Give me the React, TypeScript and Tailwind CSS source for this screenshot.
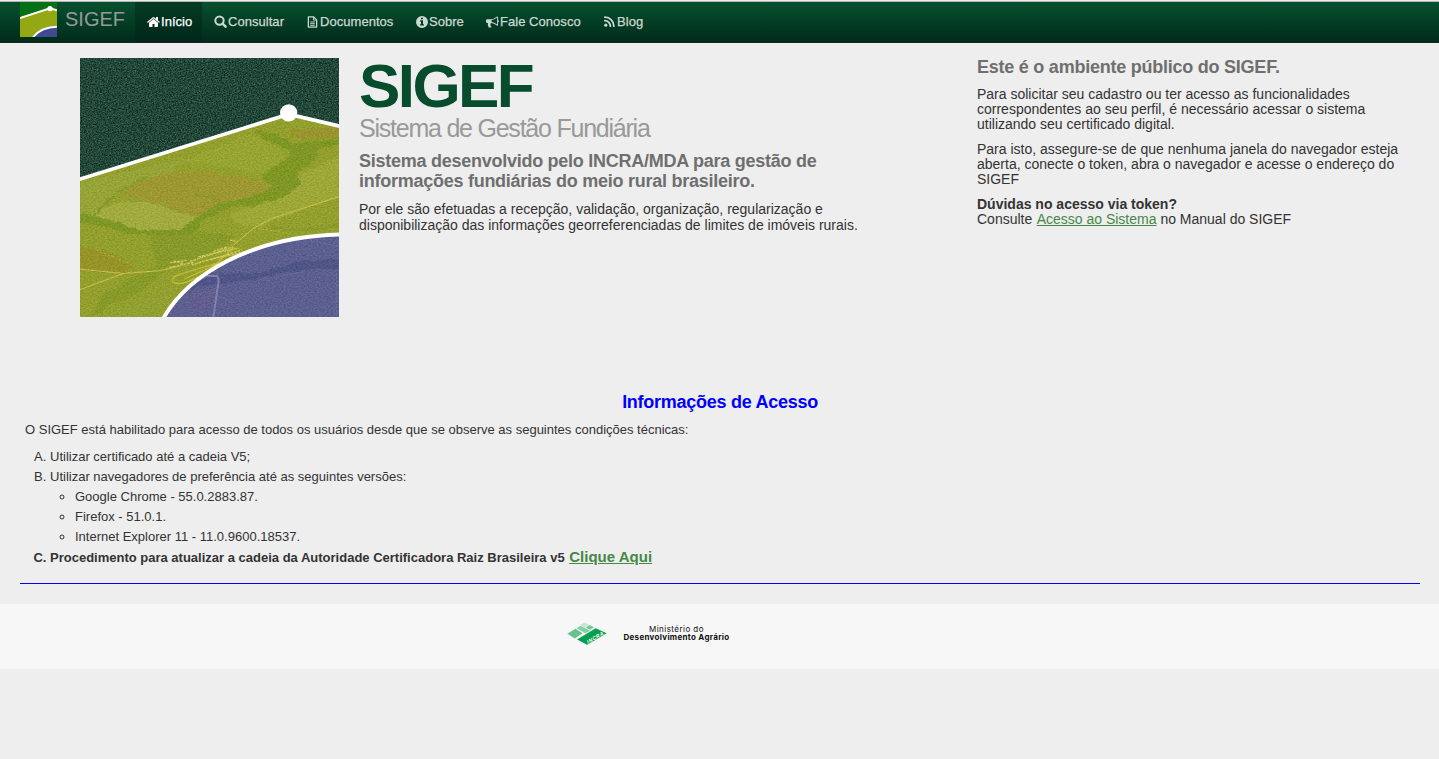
import React from "react";

type IconProps = { className?: string };

const HomeIcon = ({ className }: IconProps) => (
  <svg viewBox="0 0 1664 1792" fill="currentColor" className={className}>
    <path d="M1408 992v480q0 26-19 45t-45 19H960v-384H704v384H320q-26 0-45-19t-19-45V992q0-1 .5-3t.5-3l575-474 575 474q1 2 1 6zm223-69l-62 74q-8 9-21 11h-3q-13 0-21-7L832 424 140 1001q-12 8-24 7-13-2-21-11l-62-74q-8-10-7-23.500T37 878L756 279q32-26 76-26t76 26l244 204V288q0-14 9-23t23-9h192q14 0 23 9t9 23v408l219 182q10 8 11 21.500t-7 23.500z" />
  </svg>
);

const SearchIcon = ({ className }: IconProps) => (
  <svg viewBox="0 0 13 13" fill="none" stroke="currentColor" className={className}>
    <circle cx="5.500" cy="5.600" r="4.200" strokeWidth="2" />
    <path d="M8.600 8.700L11.600 11.700" strokeWidth="2.400" strokeLinecap="round" />
  </svg>
);

const DocIcon = ({ className }: IconProps) => (
  <svg viewBox="0 0 11 13" fill="none" stroke="currentColor" className={className}>
    <path d="M1 1h5.800L10 4.200V12H1z" strokeWidth="1.400" strokeLinejoin="round" />
    <path d="M6.500 1v3.500H10M3 6.500h5M3 8.300h5M3 10.100h5" strokeWidth="1" />
  </svg>
);

const InfoIcon = ({ className }: IconProps) => (
  <svg viewBox="0 0 1536 1536" fill="currentColor" className={className}>
    <path
      fillRule="evenodd"
      d="M768 0a768 768 0 1 1 0 1536A768 768 0 0 1 768 0zM640 224v192h256V224zM512 544v160h128v352H512v160h512v-160H896V544z"
    />
  </svg>
);

const HornIcon = ({ className }: IconProps) => (
  <svg viewBox="0 0 1792 1792" fill="currentColor" className={className}>
    <path
      fillRule="evenodd"
      d="M1664 640q53 0 90.500 37.500T1792 768t-37.500 90.500T1664 896v384q0 52-38 90t-90 38q-417-347-812-380-58 19-91 66t-31 100.500 40 92.500q-20 33-23 65.500t6 58 33.500 55 48 50T768 1568q-29 58-111.500 83t-168.500 11.500-132-55.500q-7-23-29.500-87.500t-32-94.500-23-89-15-101 3.500-98.500 22-110.500H160q-66 0-113-47T0 864V672q0-66 47-113t113-47h480q435 0 896-384 52 0 90 38t38 90zm-128 604V290q-394 302-768 343v270q377 42 768 341z"
    />
  </svg>
);

const RssIcon = ({ className }: IconProps) => (
  <svg viewBox="0 0 11 11" fill="none" stroke="currentColor" className={className}>
    <circle cx="1.800" cy="9.200" r="1.600" fill="currentColor" stroke="none" />
    <path d="M.9 4.700a5.600 5.600 0 0 1 5.500 5.500M.9 1.200a9 9 0 0 1 9 9" strokeWidth="1.800" strokeLinecap="round" />
  </svg>
);

const BrandMark = () => (
  <svg viewBox="60 6 111 105" preserveAspectRatio="none" className="h-[35px] w-[37px] shrink-0">
    <rect x="60" y="6" width="111" height="105" fill="#067014" />
    <path d="M60 54L150 25 171 31V111H60z" fill="#93a813" />
    <path d="M98 111Q122 78 171 77V111z" fill="#414991" />
    <path d="M60 54L150 25 171 31" fill="none" stroke="#fff" strokeWidth="6" />
    <path d="M99 112Q122 81 172 80" fill="none" stroke="#fff" strokeWidth="6" />
    <circle cx="150" cy="26" r="8" fill="#fff" />
  </svg>
);

const MapPicture = () => (
  <svg viewBox="30 22 777 779" preserveAspectRatio="none" className="mt-px h-[259px] w-[259px] shrink-0">
    <defs>
      <filter id="forest" x="0" y="0" width="100%" height="100%" colorInterpolationFilters="sRGB">
        <feTurbulence type="fractalNoise" baseFrequency="0.21 0.29" numOctaves="3" seed="4" />
        <feColorMatrix values="0.4 0 0 0 -0.065  0.45 0 0 0 0.055  0.4 0 0 0 0.025  0 0 0 0 1" />
      </filter>
      <filter id="grain" x="0" y="0" width="100%" height="100%" colorInterpolationFilters="sRGB">
        <feTurbulence type="fractalNoise" baseFrequency="0.17 0.27" numOctaves="3" seed="9" />
        <feColorMatrix values="1.400 0 0 0 -0.2  1.400 0 0 0 -0.2  1.400 0 0 0 -0.2  0 0 0 0 1" />
      </filter>
      <filter id="rough" x="-10%" y="-10%" width="120%" height="120%" colorInterpolationFilters="sRGB">
        <feTurbulence type="fractalNoise" baseFrequency="0.05" numOctaves="3" seed="3" result="n" />
        <feDisplacementMap in="SourceGraphic" in2="n" scale="18" xChannelSelector="R" yChannelSelector="G" />
      </filter>
      <clipPath id="field">
        <path d="M30 386L656 190 807 226V801H30z" />
      </clipPath>
      <clipPath id="lake">
        <path d="M282 801C350 690 500 560 807 553V801z" />
      </clipPath>
    </defs>
    <rect x="30" y="22" width="777" height="400" fill="#1d4437" />
    <rect x="30" y="22" width="777" height="400" filter="url(#forest)" />
    <g clipPath="url(#field)">
      <rect x="30" y="180" width="777" height="621" fill="#97a521" />
      <g filter="url(#rough)">
        <path d="M30 400L350 320 300 370 140 430 60 500H30z" fill="#9aab2d" />
        <path d="M150 430Q240 360 390 364Q520 375 620 405Q560 450 500 460L440 455Q410 505 390 508L300 470Q240 455 150 430z" fill="#a19c25" />
        <path d="M60 495Q130 440 250 460L400 510Q370 545 330 545Q210 550 150 520z" fill="#a6b137" />
        <path d="M340 330L540 250Q660 300 650 350L580 370Q480 350 340 330z" fill="#9aaa26" />
        <path d="M690 370L807 320V440L560 530Q480 530 480 490Q620 460 690 370z" fill="#a1ae2f" />
        <path d="M650 240L807 230V262L700 270z" fill="#9d9926" />
        <path d="M545 240L610 245 670 280 820 262V280L740 295 745 320 680 370 690 400 640 440 560 465 480 470 400 510 370 550 290 560 180 550 100 530 20 510V490L110 505 210 540 330 540 400 485 450 460 540 440 610 410 575 375 660 320 660 300 590 270z" fill="#7f9a18" />
        <path d="M240 560L390 545 500 560 410 620 300 650 220 720 130 760 60 810 90 740 190 680 260 650z" fill="#899e1d" />
        <path d="M20 590L110 600 200 650 150 670 20 660z" fill="#9a971c" />
        <path d="M100 810L180 750 330 700 280 810z" fill="#96a526" />
        <path d="M370 435Q430 430 450 465M600 530Q710 550 820 520M50 540Q90 440 230 380" fill="none" stroke="#899d1e" strokeWidth="7" />
      </g>
      <g fill="none" stroke="#d8cb42" strokeWidth="3">
        <path d="M807 439L610 503 552 533 490 585" />
        <path d="M490 592L440 640 330 672Q300 685 308 695Q320 705 350 696L440 655M345 686L480 625 540 603" stroke="#d3c62d" strokeWidth="4" />
        <path d="M30 719L160 670 265 662 330 648M30 657L160 670" />
        <path d="M552 533L660 550M80 600L200 650" strokeWidth="1.500" strokeDasharray="7 5" />
      </g>
      <g fill="none" stroke="#e0d65c" strokeWidth="4" strokeDasharray="8 3">
        <path d="M300 638L350 630M298 652L370 637M310 633L340 640M360 634L490 590M365 644L515 600M385 620L505 594M430 604L475 590M480 570L500 573M420 628L530 604" />
      </g>
    </g>
    <g clipPath="url(#lake)">
      <rect x="270" y="540" width="537" height="261" fill="#575b92" />
      <g filter="url(#rough)">
        <path d="M350 710L430 670 530 672 620 655 700 630 820 625V655L690 660 540 690 420 705 340 725z" fill="#484f89" />
        <path d="M360 735L435 710 430 770 380 790z" fill="#5f5991" />
      </g>
      <path d="M410 678L440 677Q447 680 445 700L430 801" fill="none" stroke="#8580b4" strokeWidth="6" />
      <path d="M440 735L490 757M720 570L807 588M800 670V801M560 690L700 665" fill="none" stroke="#7676a8" strokeWidth="2" strokeDasharray="6 4" />
    </g>
    <g clipPath="url(#field)">
      <rect x="30" y="180" width="777" height="621" filter="url(#grain)" opacity="0.13" />
    </g>
    <path d="M28 387L656 191 809 227" fill="none" stroke="#fff" strokeWidth="11" />
    <path d="M281 803C355 675 540 560 809 553" fill="none" stroke="#fff" strokeWidth="12" />
    <circle cx="656" cy="187" r="26" fill="#fff" />
  </svg>
);

const IncraMark = () => (
  <svg viewBox="50 64 123 69" className="h-[23px] w-[40px] shrink-0">
    <path d="M51 99L76 84 98 98 74 114z" fill="#66c18c" />
    <path d="M79 82L91 75 122 90 106 98z" fill="#86cfa5" />
    <path d="M90 73L103 65 117 70 104 80z" fill="#c4e6d1" />
    <path d="M107 80L119 72 133 79 121 87z" fill="#78c998" />
    <path d="M81 117L138 82 172 98 112 133z" fill="#079f4b" />
    <text x="0" y="0" transform="translate(114 131) rotate(-31) skewX(-15)" fill="#fff" fontSize="16" fontWeight="700" fontFamily="Liberation Sans, sans-serif" textLength="57">
      INCRA
    </text>
  </svg>
);

const navItems = [
  { label: "Início", icon: <HomeIcon className="h-[14px] w-[13px]" />, box: "w-[67px] pl-3 bg-[linear-gradient(#053b22,#00271a)] text-white" },
  { label: "Consultar", icon: <SearchIcon className="h-[13px] w-[13px]" />, box: "w-[93px] pl-3" },
  { label: "Documentos", icon: <DocIcon className="mr-px h-[12px] w-[11px]" />, box: "w-[109px] pl-3" },
  { label: "Sobre", icon: <InfoIcon className="h-[12px] w-[12px]" />, box: "w-[70px] pl-3" },
  { label: "Fale Conosco", icon: <HornIcon className="h-[14px] w-[13px]" />, box: "w-[118px] pl-3" },
  { label: "Blog", icon: <RssIcon className="mr-px h-[11px] w-[11px]" />, box: "w-[60px] pl-3" },
];

const browsers = ["Google Chrome - 55.0.2883.87.", "Firefox - 51.0.1.", "Internet Explorer 11 - 11.0.9600.18537."];

export default function App() {
  return (
    <div className="flex h-[759px] w-[1439px] flex-col overflow-hidden bg-[#eee] font-['Liberation_Sans',Arial,sans-serif] text-[13px] leading-5 text-[#333]">
      <header className="mt-px flex h-[42px] shrink-0 border-t border-b border-t-[#b5b5b5] border-b-[#222] bg-[linear-gradient(#07502f,#002b1a)] pl-5">
        <BrandMark />
        <span className="ml-2 w-[70px] pt-[7px] text-[20px] leading-5 text-[#999]">SIGEF</span>
        <nav className="flex text-[#ccd9d2]">
          {navItems.map((item) => (
            <a
              key={item.label}
              className={`flex h-10 items-center gap-px whitespace-nowrap pb-px tracking-[0.04px] [-webkit-text-stroke:0.25px_currentColor] ${item.box}`}
            >
              {item.icon}
              {item.label}
            </a>
          ))}
        </nav>
      </header>

      <section className="flex h-[336px] shrink-0 pl-20 pt-[14px]">
        <MapPicture />
        <div className="ml-5 w-[618px] whitespace-nowrap">
          <h1 className="mb-[2px] text-[62px] font-bold leading-[58px] tracking-[-2.6px] text-[#064c2d]">SIGEF</h1>
          <p className="-mt-px text-[25px] leading-[25px] tracking-[-1.23px] text-[#999]">Sistema de Gestão Fundiária</p>
          <h2 className="mt-[10px] text-[18px] font-bold leading-5 tracking-[-0.26px] text-[#6f6f6f]">
            Sistema desenvolvido pelo INCRA/MDA para gestão de
            <br />
            informações fundiárias do meio rural brasileiro.
          </h2>
          <p className="mt-[10px] text-[14px] leading-4">
            Por ele são efetuadas a recepção, validação, organização, regularização e
            <br />
            disponibilização das informações georreferenciadas de limites de imóveis rurais.
          </p>
        </div>
        <div className="whitespace-nowrap text-[14px] leading-[15px]">
          <h2 className="text-[18px] font-bold leading-5 tracking-[-0.24px] text-[#6f6f6f]">Este é o ambiente público do SIGEF.</h2>
          <p className="mt-[10px]">
            Para solicitar seu cadastro ou ter acesso as funcionalidades
            <br />
            correspondentes ao seu perfil, é necessário acessar o sistema
            <br />
            utilizando seu certificado digital.
          </p>
          <p className="mt-[10px]">
            Para isto, assegure-se de que nenhuma janela do navegador esteja
            <br />
            aberta, conecte o token, abra o navegador e acesse o endereço do
            <br />
            SIGEF
          </p>
          <p className="mt-[10px]">
            <b>Dúvidas no acesso via token?</b>
            <br />
            Consulte <a className="ml-[0.5px] text-[#468847] underline">Acesso ao Sistema</a> no Manual do SIGEF
          </p>
        </div>
      </section>

      <section className="ml-5 mr-[19px] h-[205px] shrink-0 border-b border-[#00f] pt-[13px]">
        <h2 className="text-center text-[18px] font-bold leading-5 tracking-[-0.27px] text-[#00f]">Informações de Acesso</h2>
        <p className="ml-[5px] mt-2">
          O SIGEF está habilitado para acesso de todos os usuários desde que se observe as seguintes condições técnicas:
        </p>
        <ol className="ml-[30px] mt-[7px] list-[upper-alpha]">
          <li>Utilizar certificado até a cadeia V5;</li>
          <li>
            Utilizar navegadores de preferência até as seguintes versões:
            <ul className="ml-[25px] list-[circle]">
              {browsers.map((b) => (
                <li key={b}>{b}</li>
              ))}
            </ul>
          </li>
          <li className="font-bold">
            Procedimento para atualizar a cadeia da Autoridade Certificadora Raiz Brasileira v5{" "}
            <a className="ml-px text-[15px] text-[#468847] underline">Clique Aqui</a>
          </li>
        </ol>
      </section>

      <footer className="mt-5 flex h-[65px] shrink-0 bg-[#f7f7f7] pl-[567px] pt-[18px]">
        <IncraMark />
        <div className="ml-4 mt-[3px] flex w-[107px] flex-col items-center whitespace-nowrap font-['Inter',sans-serif] text-[8px] leading-2 text-[#111]">
          <p className="tracking-[0.45px]">Ministério do</p>
          <p className="font-bold tracking-[0.3px]">Desenvolvimento Agrário</p>
        </div>
      </footer>
    </div>
  );
}
